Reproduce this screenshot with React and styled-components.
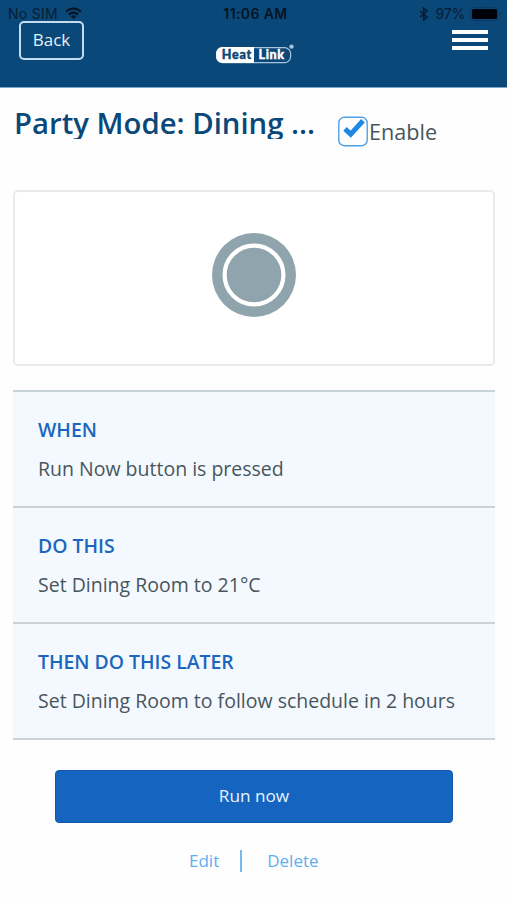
import React from "react";
import styled, { createGlobalStyle } from "styled-components";

const Global = createGlobalStyle`
  * { box-sizing: border-box; }
  body { margin: 0; background: #fff; font-family: "Open Sans", "Noto Sans", sans-serif; }
`;

const Screen = styled.div`
  width: 507px;
  height: 900px;
  overflow: hidden;
  background: #fefefe;
`;

const Header = styled.header`
  height: 88px;
  background: #0a4879;
  border-bottom: 1px solid #7fa5c5;
`;

const StatusBar = styled.div`
  display: grid;
  grid-template-columns: 1fr auto 1fr;
  align-items: center;
  height: 21px;
  padding: 6px 6px 0 8px;
  font: 14px/15px Inter, "Liberation Sans", sans-serif;
  color: #071d31;
`;

const StatusGroup = styled.div`
  display: flex;
  align-items: center;
  justify-content: ${(p) => (p.$end ? "flex-end" : "flex-start")};
  gap: ${(p) => (p.$end ? "5px" : "7px")};
  letter-spacing: ${(p) => (p.$end ? "-0.2px" : "0.3px")};
  svg { display: block; }
`;

const Clock = styled.div`
  padding-left: 2px;
  font-weight: 600;
  letter-spacing: 0.4px;
  color: #051525;
`;

const NavBar = styled.nav`
  display: grid;
  grid-template-columns: 1fr auto 1fr;
  align-items: start;
  height: 66px;
  padding: 0 19px;
`;

const BackButton = styled.button`
  width: 65px;
  height: 39px;
  padding: 0 0 2px;
  border: 2px solid #c3dcf0;
  border-radius: 5px;
  background: transparent;
  color: #e3f0fa;
  font: 17px/24px "Open Sans", sans-serif;
`;

const Logo = styled.svg`
  display: block;
  margin-top: 22px;
`;

const MenuButton = styled.button`
  display: flex;
  flex-direction: column;
  justify-self: end;
  gap: 4px;
  margin-top: 9px;
  padding: 0;
  border: 0;
  background: transparent;
`;

const MenuLine = styled.span`
  display: block;
  width: 36px;
  height: 4px;
  background: #fff;
`;

const TitleRow = styled.div`
  display: flex;
  height: 102px;
  padding: 19px 15px 0 14px;
`;

const Title = styled.h1`
  width: 324px;
  height: 32px;
  margin: 0;
  overflow: hidden;
  white-space: nowrap;
  font-size: 29.3px;
  font-weight: 600;
  line-height: 32px;
  color: #0a4879;
`;

const EnableLabel = styled.div`
  display: flex;
  align-items: center;
  gap: 1px;
  height: 31px;
  margin-top: 9px;
  font-size: 21.6px;
  color: #48565c;
`;

const Check = styled.svg`
  display: block;
`;

const Main = styled.main`
  padding: 0 12px 0 13px;
`;

const Preview = styled.div`
  display: flex;
  justify-content: center;
  height: 176px;
  padding-top: 41px;
  border: 2px solid #e8eaeb;
  border-radius: 5px;
  background: #fff;
`;

const Rules = styled.div`
  margin-top: 24px;
  border-top: 2px solid #c8d2d7;
`;

const Rule = styled.section`
  height: 116px;
  padding: 24px 25px 0;
  border-bottom: 2px solid #c8d2d7;
  background: #f4f9ff;
`;

const RuleHeading = styled.h2`
  margin: 0;
  font-size: 19.4px;
  font-weight: 600;
  line-height: 28px;
  color: #1b67be;
`;

const RuleText = styled.p`
  margin: 11px 0 0;
  font-size: 19.5px;
  line-height: 28px;
  white-space: nowrap;
  color: #48565c;
`;

const RunButton = styled.button`
  display: block;
  width: 398px;
  height: 53px;
  margin: 30px auto 0 42px;
  padding: 0 0 1px;
  border: 1px solid #1059ae;
  border-radius: 4px;
  background: #1565c0;
  color: #e6f3ff;
  font: 17.2px/24px "Open Sans", sans-serif;
`;

const Actions = styled.div`
  display: flex;
  align-items: center;
  height: 24px;
  margin: 26px 0 0 176px;
  font-size: 17px;
  line-height: 24px;
  color: #5eaeee;
`;

const Divider = styled.span`
  width: 2px;
  height: 22px;
  margin: 0 25px 0 21px;
  background: #78b9ef;
`;

const rules = [
  ["WHEN", "Run Now button is pressed"],
  ["DO THIS", "Set Dining Room to 21°C"],
  ["THEN DO THIS LATER", "Set Dining Room to follow schedule in 2 hours"],
];

function WifiIcon() {
  return (
    <svg width="17" height="13" viewBox="0 0 17 13">
      <g fill="none" stroke="#051525" strokeWidth="2.3">
        <path d="M1 4.7 Q8.5 -2 16 4.7" />
        <path d="M3.8 7.7 Q8.5 3.6 13.2 7.7" />
      </g>
      <path d="M8.5 12 L5.8 9.3 Q8.5 7.2 11.2 9.3 Z" fill="#051525" />
    </svg>
  );
}

function BluetoothIcon() {
  return (
    <svg width="12" height="14" viewBox="0 0 12 14">
      <path d="M1 4 L8 10 L4.7 13 V1 L8 4 L1 10" fill="none" stroke="#071d31" strokeWidth="1.6" />
    </svg>
  );
}

function BatteryIcon() {
  return (
    <svg width="31" height="14" viewBox="0 0 31 14">
      <rect x="0.5" y="0.5" width="27" height="13" rx="3" fill="none" stroke="#093b65" />
      <rect x="2" y="2" width="25" height="10" rx="1.5" fill="#00040a" />
      <path d="M29 4.5 Q31.5 7 29 9.5 Z" fill="#093b65" />
    </svg>
  );
}

function HeatLinkLogo() {
  return (
    <Logo width="80" height="22" viewBox="0 0 80 22">
      <rect x="2.6" y="4.6" width="74" height="15" rx="6" fill="none" stroke="#a9c4db" strokeWidth="1.2" />
      <path d="M40 4 H9 Q2 4 2 12 Q2 20 9 20 H40 Z" fill="#fff" />
      <g fontFamily="Lato, sans-serif" fontWeight="900" fontSize="12.5">
        <text x="7.8" y="16.3" fill="#0a4879" stroke="#0a4879" strokeWidth="0.4" textLength="29.5">Heat</text>
        <text x="44.5" y="16.3" fill="#fff" stroke="#fff" strokeWidth="0.4" textLength="25.5">Link</text>
      </g>
      <circle cx="77.5" cy="3.6" r="2.2" fill="#a9c4db" />
    </Logo>
  );
}

export default function App() {
  return (
    <Screen>
      <Global />
      <Header>
        <StatusBar>
          <StatusGroup><span>No SIM</span><WifiIcon /></StatusGroup>
          <Clock>11:06 AM</Clock>
          <StatusGroup $end><BluetoothIcon /><span>97%</span><BatteryIcon /></StatusGroup>
        </StatusBar>
        <NavBar>
          <BackButton>Back</BackButton>
          <HeatLinkLogo />
          <MenuButton aria-label="Menu"><MenuLine /><MenuLine /><MenuLine /></MenuButton>
        </NavBar>
      </Header>
      <TitleRow>
        <Title>Party Mode: Dining ...</Title>
        <EnableLabel>
          <Check width="30" height="31" viewBox="0 0 30 31">
            <rect x="0.8" y="1.3" width="28.4" height="28.4" rx="5.5" fill="#fff" stroke="#4f9fe6" strokeWidth="1.4" />
            <path d="M7 12.8 L12.7 18.1 L25 4.8" fill="none" stroke="#1e88e5" strokeWidth="5" />
          </Check>
          Enable
        </EnableLabel>
      </TitleRow>
      <Main>
        <Preview>
          <svg width="84" height="84" viewBox="0 0 84 84">
            <circle cx="42" cy="42" r="42" fill="#90a4ae" />
            <circle cx="42" cy="42" r="29.4" fill="none" stroke="#fff" strokeWidth="4.2" />
          </svg>
        </Preview>
        <Rules>
          {rules.map(([heading, text]) => (
            <Rule key={heading}>
              <RuleHeading>{heading}</RuleHeading>
              <RuleText>{text}</RuleText>
            </Rule>
          ))}
        </Rules>
        <RunButton>Run now</RunButton>
        <Actions><span>Edit</span><Divider /><span>Delete</span></Actions>
      </Main>
    </Screen>
  );
}
